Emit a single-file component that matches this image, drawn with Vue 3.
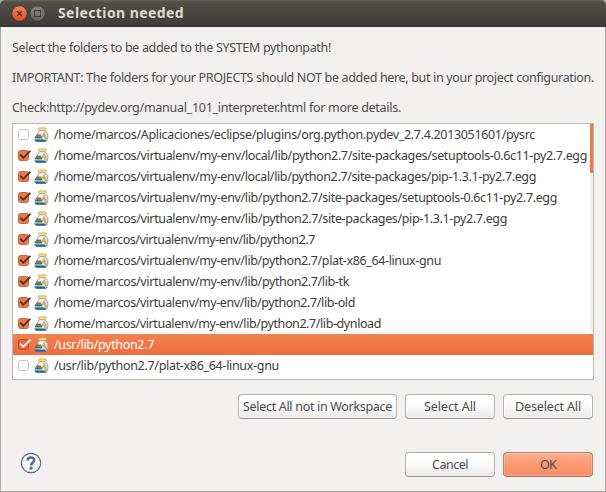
<script setup>
const rows = [
  { path: '/home/marcos/Aplicaciones/eclipse/plugins/org.python.pydev_2.7.4.2013051601/pysrc', w: 481, on: false },
  { path: '/home/marcos/virtualenv/my-env/local/lib/python2.7/site-packages/setuptools-0.6c11-py2.7.egg', w: 533, on: true },
  { path: '/home/marcos/virtualenv/my-env/local/lib/python2.7/site-packages/pip-1.3.1-py2.7.egg', w: 482, on: true },
  { path: '/home/marcos/virtualenv/my-env/lib/python2.7/site-packages/setuptools-0.6c11-py2.7.egg', w: 503, on: true },
  { path: '/home/marcos/virtualenv/my-env/lib/python2.7/site-packages/pip-1.3.1-py2.7.egg', w: 453, on: true },
  { path: '/home/marcos/virtualenv/my-env/lib/python2.7', w: 261, on: true },
  { path: '/home/marcos/virtualenv/my-env/lib/python2.7/plat-x86_64-linux-gnu', w: 387, on: true },
  { path: '/home/marcos/virtualenv/my-env/lib/python2.7/lib-tk', w: 295, on: true },
  { path: '/home/marcos/virtualenv/my-env/lib/python2.7/lib-old', w: 301, on: true },
  { path: '/home/marcos/virtualenv/my-env/lib/python2.7/lib-dynload', w: 327, on: true },
  { path: '/usr/lib/python2.7', w: 100, on: true, selected: true },
  { path: '/usr/lib/python2.7/plat-x86_64-linux-gnu', w: 225, on: false },
]

// Tracks a label so that it spans the given number of pixels.
const vFit = {
  mounted(el, { value }) {
    const natural = el.getBoundingClientRect().width
    el.style.letterSpacing = (value - natural) / el.textContent.length + 'px'
  },
}
</script>

<template>
  <div class="window">
    <header class="titlebar">
      <svg class="controls" width="35" height="17" viewBox="0 0 35 17">
        <defs>
          <linearGradient id="closeFill" x1="0" y1="0" x2="0" y2="1">
            <stop offset="0" stop-color="#fa8258" /><stop offset="1" stop-color="#e2501f" />
          </linearGradient>
          <linearGradient id="maxFill" x1="0" y1="0" x2="0" y2="1">
            <stop offset="0" stop-color="#85847d" /><stop offset="1" stop-color="#66655f" />
          </linearGradient>
        </defs>
        <circle cx="8.5" cy="8.5" r="7.7" fill="url(#closeFill)" stroke="#38322d" stroke-width=".7" />
        <path d="M6 6l5 5M11 6l-5 5" stroke="#5b2a18" stroke-width="1.2" />
        <circle cx="26.5" cy="8.5" r="7.7" fill="url(#maxFill)" stroke="#34332f" stroke-width=".7" />
        <rect x="23.5" y="5.5" width="6" height="6" fill="none" stroke="#3c3b37" />
      </svg>
      <h1><span v-fit="126">Selection needed</span></h1>
    </header>

    <main>
      <div class="message">
        <p><span v-fit="319">Select the folders to be added to the SYSTEM pythonpath!</span></p>
        <p><span v-fit="582">IMPORTANT: The folders for your PROJECTS should NOT be added here, but in your project configuration.</span></p>
        <p><span v-fit="389">Check:http://pydev.org/manual_101_interpreter.html for more details.</span></p>
      </div>

      <div class="list">
        <div v-for="row in rows" :key="row.path" class="row" :class="{ selected: row.selected }">
          <svg class="check" width="15" height="13" viewBox="0 0 15 13">
            <rect x="0.5" y="1.5" width="10" height="10" rx="2"
              :fill="row.selected ? '#e2693a' : row.on ? '#f07746' : '#fff'"
              :stroke="row.selected ? '#b84f28' : row.on ? '#cf6238' : '#c6c4c1'" />
            <path v-if="row.on" d="M2.2 5.6L5.3 8.8L12.4 1.8" fill="none" stroke-width="1.8"
              :stroke="row.selected ? '#fff' : '#3c3632'" />
          </svg>
          <svg class="jar" width="16" height="16" viewBox="0 0 16 16">
            <path d="M5.5 3.5L3.5 6.5v7.5h9.5v-2l.8-1V6.5L11 3.5z" fill="#d3e3f3" stroke="#7fa0c6" stroke-width=".9" />
            <path d="M5.5 5L4.5 7.5h4l1-3z" fill="#fff" />
            <path d="M8.6 9.8L10 7L12.4 13" fill="none" stroke="#eba640" stroke-width="2" />
            <path d="M9.2 10.5v2.8" stroke="#fff" />
            <rect x="4.5" y="1" width="7.8" height="2.2" rx=".9" fill="#fff3c4" stroke="#d8a62c" />
            <path d="M2 7.6h5v1.7H2z" fill="#b9532f" />
            <path d="M.8 9.3h7.4v2.3H.8z" fill="#2b8064" />
            <path d="M1 11.6h8v1H1z" fill="#c9e2dc" />
            <path d="M0 12.4h10.5l1.8 2.4H2z" fill="#265d8f" />
          </svg>
          <span v-fit="row.w">{{ row.path }}</span>
        </div>
        <div class="scrollbar"><div class="thumb"></div></div>
      </div>

      <div class="buttons">
        <button class="wide"><span v-fit="149">Select All not in Workspace</span></button>
        <button><span v-fit="52">Select All</span></button>
        <button><span v-fit="66">Deselect All</span></button>
      </div>

      <footer>
        <svg class="help" width="22" height="22" viewBox="0 0 22 22">
          <circle cx="11" cy="11" r="9.7" fill="#f7f7f7" stroke="#566c8e" stroke-width="1.2" />
          <path d="M7.6 8.6C7.6 4.3 14.2 4.5 14.2 8.2C14.2 10.5 11 10.6 11 13.5" fill="none" stroke="#566c8e" stroke-width="2.5" />
          <circle cx="11" cy="16.2" r="1.6" fill="#566c8e" />
        </svg>
        <button><span v-fit="36">Cancel</span></button>
        <button class="default"><span v-fit="16">OK</span></button>
      </footer>
    </main>
  </div>
</template>

<style>
html, body { background: #b4b0a9; }
</style>

<style scoped>
* { box-sizing: border-box; }
.window {
  width: 606px;
  height: 492px;
  display: flex;
  flex-direction: column;
  overflow: hidden;
  font: 12.5px/20px "Noto Sans", "Open Sans", sans-serif;
  color: #4c4c4c;
  white-space: nowrap;
}
.titlebar {
  height: 27px;
  flex: none;
  display: flex;
  align-items: center;
  padding-left: 11px;
  background: linear-gradient(#6b6962 0, #504f48 2px, #3d3c38);
  border-bottom: 1px solid #353430;
  border-radius: 5px 5px 0 0;
}
.controls { flex: none; }
h1 {
  margin: 0 0 0 12px;
  font-size: 14px;
  font-weight: 700;
  line-height: 20px;
  color: #dfdbd2;
}
main {
  flex: 1;
  border: 1px solid #aaa8a4;
  border-top: 0;
  background: #f2f1f0;
  padding: 11px 11px 0;
}
.message { height: 85px; }
p { margin: 0 0 10px; height: 20px; }
.list {
  position: relative;
  height: 257px;
  border: 1px solid #bcb9b5;
  background: #fff;
  color: #3c3c3c;
}
.row { height: 21px; display: flex; align-items: center; padding-left: 5px; }
.row.selected { background: linear-gradient(#f68050, #eb6e3d); color: #fff; }
.check { flex: none; margin-right: 1px; }
.jar { flex: none; margin-right: 4px; }
.scrollbar {
  position: absolute;
  top: 0;
  right: 0;
  width: 3px;
  height: 206px;
  background: #f2f1f0;
}
.thumb { height: 49px; background: #f07746; }
.buttons { display: flex; justify-content: flex-end; gap: 8px; margin-top: 14px; padding-right: 1px; }
button {
  width: 90px;
  height: 25px;
  padding: 0;
  border: 1px solid #b5b2ae;
  border-bottom-color: #999693;
  border-radius: 4px;
  background: linear-gradient(#fff, #fafafa 50%, #e9e8e7);
  box-shadow: inset 0 0 0 1px rgba(255, 255, 255, .5);
  font: inherit;
  line-height: 20px;
  color: #4c4c4c;
}
.wide { width: 159px; }
.default {
  border-color: #b58370;
  border-bottom-color: #a07363;
  background: linear-gradient(#fdaf90, #f7986f 55%, #f58f68);
  box-shadow: inset 0 0 0 1px rgba(255, 255, 255, .2);
}
footer { display: flex; gap: 8px; margin-top: 33px; padding-right: 1px; }
.help { margin: 0 auto 0 8px; }
</style>
